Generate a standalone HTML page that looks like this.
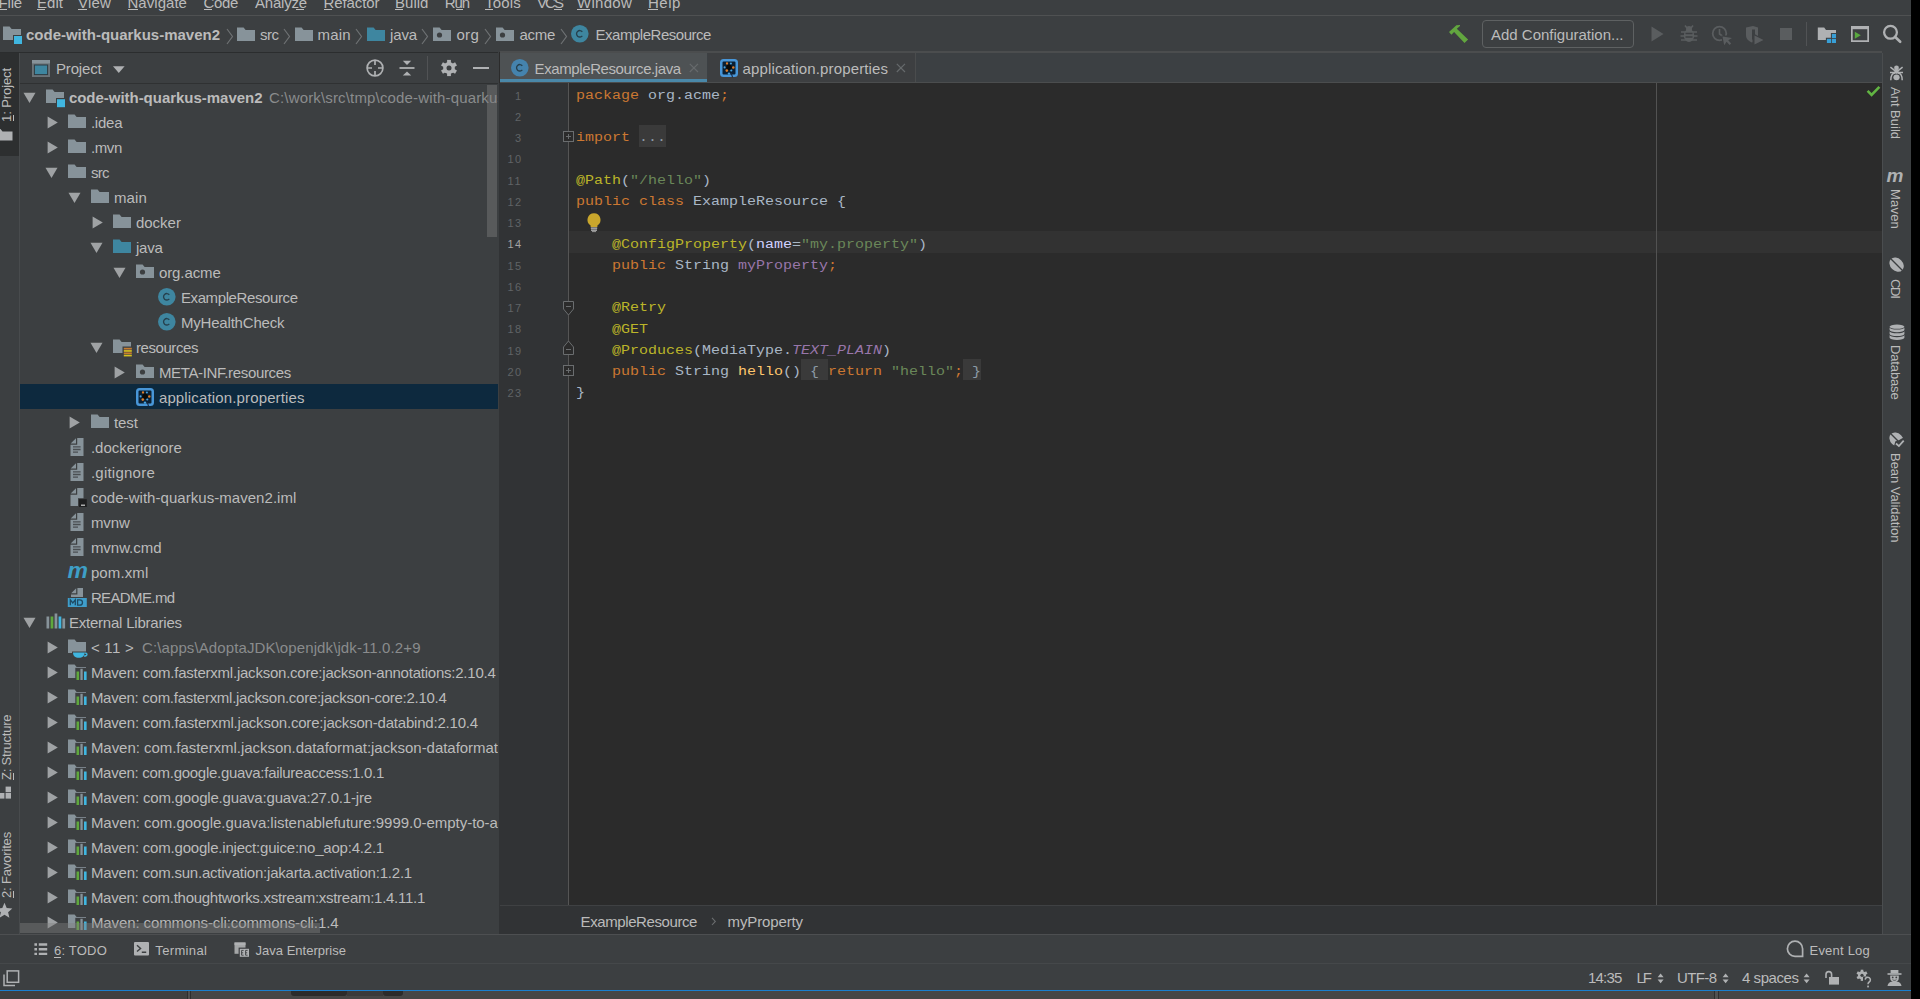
<!DOCTYPE html>
<html><head><meta charset="utf-8"><title>code-with-quarkus-maven2</title>
<style>
html,body{margin:0;padding:0;background:#3c3f41;}
body{width:1920px;height:999px;overflow:hidden;position:relative;font-family:'Liberation Sans',sans-serif;}
#r{position:absolute;left:0;top:0;width:1920px;height:999px;overflow:hidden;background:#3c3f41;}
#r div,#r svg,#r span{position:absolute;display:block;}
.t{white-space:pre;line-height:1;}
</style></head>
<body><div id="r">
<div style="left:0px;top:15px;width:1911px;height:1px;background:#4f5152;"></div>
<div style="left:0px;top:52px;width:498px;height:1px;background:#2b2d2e;"></div>
<div style="left:500px;top:51px;width:1382px;height:2px;background:#4b4d4e;"></div>
<div style="left:18.5px;top:53px;width:1.5px;height:881px;background:#484b4d;"></div>
<div style="left:0px;top:53px;width:18.5px;height:103px;background:#2d2f30;"></div>
<div style="left:20px;top:83px;width:478px;height:1px;background:#2f3132;"></div>
<div style="left:498.8px;top:52px;width:1.2px;height:31px;background:#2b2b2b;"></div>
<div style="left:500px;top:53px;width:1382px;height:29px;background:#3c4043;"></div>
<div style="left:500px;top:82px;width:1382px;height:1px;background:#4b4d4e;"></div>
<div style="left:500px;top:53px;width:207px;height:29px;background:#4e5254;"></div>
<div style="left:500px;top:79px;width:207px;height:3px;background:#4a88a9;"></div>
<div style="left:708px;top:53px;width:207px;height:29px;background:#3d3f41;"></div>
<div style="left:915px;top:53px;width:1px;height:29px;background:#4a4c4d;"></div>
<div style="left:500px;top:83px;width:1382px;height:823px;background:#2b2b2b;"></div>
<div style="left:499px;top:83px;width:69px;height:823px;background:#313335;"></div>
<div style="left:568px;top:83px;width:1px;height:823px;background:#555555;"></div>
<div style="left:499px;top:906px;width:1383px;height:28px;background:#313335;"></div>
<div style="left:500px;top:905px;width:1382px;height:1px;background:#3f4143;"></div>
<div style="left:1882px;top:53px;width:1px;height:881px;background:#4a4d4f;"></div>
<div style="left:1883px;top:53px;width:28px;height:881px;background:#3c3f41;"></div>
<div style="left:0px;top:934px;width:1911px;height:1px;background:#4d4f51;"></div>
<div style="left:0px;top:963px;width:1911px;height:1px;background:#45484a;"></div>
<div style="left:0px;top:990px;width:1911px;height:1px;background:#1a80d0;"></div>
<div style="left:0px;top:991px;width:1911px;height:8px;background:#464646;"></div>
<div style="left:0px;top:991px;width:187px;height:8px;background:#404040;"></div>
<div style="left:187px;top:991px;width:1px;height:8px;background:#2e2e2e;"></div>
<div style="left:190px;top:991px;width:1px;height:8px;background:#2e2e2e;"></div>
<div style="left:188px;top:991px;width:2px;height:8px;background:#505050;"></div>
<div style="left:291px;top:991px;width:56px;height:5px;background:#2b2b2b;border-radius:0 0 3px 3px;"></div>
<div style="left:347px;top:991px;width:36px;height:5px;background:#3a3a3a;"></div>
<div style="left:383px;top:991px;width:20px;height:5px;background:#2b2b2b;border-radius:0 0 3px 3px;"></div>
<div style="left:1714px;top:991px;width:1px;height:8px;background:#2e2e2e;"></div>
<div style="left:1718px;top:991px;width:1px;height:8px;background:#2e2e2e;"></div>
<div style="left:1715px;top:991px;width:3px;height:8px;background:#505050;"></div>
<div style="left:1911px;top:0px;width:9px;height:999px;background:#000000;"></div>
<span class="t" style="left:-1.50px;top:-4.70px;font-size:15px;color:#bbbbbb;letter-spacing:-0.168px;text-decoration:none;">File</span>
<span class="t" style="left:37.00px;top:-4.70px;font-size:15px;color:#bbbbbb;letter-spacing:0.035px;text-decoration:none;">Edit</span>
<span class="t" style="left:78.00px;top:-4.70px;font-size:15px;color:#bbbbbb;letter-spacing:0.188px;text-decoration:none;">View</span>
<span class="t" style="left:127.50px;top:-4.70px;font-size:15px;color:#bbbbbb;letter-spacing:0.037px;text-decoration:none;">Navigate</span>
<span class="t" style="left:203.50px;top:-4.70px;font-size:15px;color:#bbbbbb;letter-spacing:-0.340px;text-decoration:none;">Code</span>
<span class="t" style="left:255.00px;top:-4.70px;font-size:15px;color:#bbbbbb;letter-spacing:-0.196px;text-decoration:none;">Analyze</span>
<span class="t" style="left:323.50px;top:-4.70px;font-size:15px;color:#bbbbbb;letter-spacing:-0.088px;text-decoration:none;">Refactor</span>
<span class="t" style="left:395.00px;top:-4.70px;font-size:15px;color:#bbbbbb;letter-spacing:0.028px;text-decoration:none;">Build</span>
<span class="t" style="left:444.70px;top:-4.70px;font-size:15px;color:#bbbbbb;letter-spacing:-1.077px;text-decoration:none;">Run</span>
<span class="t" style="left:485.00px;top:-4.70px;font-size:15px;color:#bbbbbb;letter-spacing:0.194px;text-decoration:none;">Tools</span>
<span class="t" style="left:537.00px;top:-4.70px;font-size:15px;color:#bbbbbb;letter-spacing:-1.948px;text-decoration:none;">VCS</span>
<span class="t" style="left:577.00px;top:-4.70px;font-size:15px;color:#bbbbbb;letter-spacing:0.273px;text-decoration:none;">Window</span>
<span class="t" style="left:648.00px;top:-4.70px;font-size:15px;color:#bbbbbb;letter-spacing:0.535px;text-decoration:none;">Help</span>
<div style="left:0px;top:9px;width:7px;height:1px;background:#bbbbbb;"></div>
<div style="left:37px;top:9px;width:8px;height:1px;background:#bbbbbb;"></div>
<div style="left:78px;top:9px;width:9px;height:1px;background:#bbbbbb;"></div>
<div style="left:127.5px;top:9px;width:10.5px;height:1px;background:#bbbbbb;"></div>
<div style="left:203.5px;top:9px;width:8.5px;height:1px;background:#bbbbbb;"></div>
<div style="left:296px;top:9px;width:8px;height:1px;background:#bbbbbb;"></div>
<div style="left:323.5px;top:9px;width:8.5px;height:1px;background:#bbbbbb;"></div>
<div style="left:395px;top:9px;width:8px;height:1px;background:#bbbbbb;"></div>
<div style="left:456px;top:9px;width:7px;height:1px;background:#bbbbbb;"></div>
<div style="left:485px;top:9px;width:8px;height:1px;background:#bbbbbb;"></div>
<div style="left:554px;top:9px;width:8px;height:1px;background:#bbbbbb;"></div>
<div style="left:577px;top:9px;width:13px;height:1px;background:#bbbbbb;"></div>
<div style="left:648px;top:9px;width:10px;height:1px;background:#bbbbbb;"></div>
<svg style="left:2px;top:24px;" width="22" height="22" viewBox="0 0 22 22"><path d="M1 2.5h6.6l2 2.6H19V16H1z" fill="#87939a"/><rect x="11" y="11" width="10" height="10" fill="#3c3f41"/><rect x="12" y="12" width="8" height="8" fill="#40b6e0"/></svg>
<span class="t" style="left:26.00px;top:27.10px;font-size:15px;color:#bbbbbb;font-weight:700;letter-spacing:-0.009px;">code-with-quarkus-maven2</span>
<svg style="left:225.5px;top:28px;" width="8" height="17" viewBox="0 0 8 17"><path d="M1 1L6.5 8.5L1 16" fill="none" stroke="#6e7173" stroke-width="1.2"/></svg>
<svg style="left:236px;top:24px;" width="20" height="20" viewBox="0 0 20 20"><path d="M1 3.5h6.6l2 2.6H19V17H1z" fill="#87939a"/></svg>
<span class="t" style="left:260.00px;top:27.10px;font-size:15px;color:#bbbbbb;letter-spacing:-0.500px;">src</span>
<svg style="left:283px;top:28px;" width="8" height="17" viewBox="0 0 8 17"><path d="M1 1L6.5 8.5L1 16" fill="none" stroke="#6e7173" stroke-width="1.2"/></svg>
<svg style="left:294px;top:24px;" width="20" height="20" viewBox="0 0 20 20"><path d="M1 3.5h6.6l2 2.6H19V17H1z" fill="#87939a"/></svg>
<span class="t" style="left:317.60px;top:27.10px;font-size:15px;color:#bbbbbb;letter-spacing:0.121px;">main</span>
<svg style="left:354.5px;top:28px;" width="8" height="17" viewBox="0 0 8 17"><path d="M1 1L6.5 8.5L1 16" fill="none" stroke="#6e7173" stroke-width="1.2"/></svg>
<svg style="left:366px;top:24px;" width="20" height="20" viewBox="0 0 20 20"><path d="M1 3.5h6.6l2 2.6H19V17H1z" fill="#3e86a0"/></svg>
<span class="t" style="left:390.00px;top:27.10px;font-size:15px;color:#bbbbbb;letter-spacing:-0.133px;">java</span>
<svg style="left:421px;top:28px;" width="8" height="17" viewBox="0 0 8 17"><path d="M1 1L6.5 8.5L1 16" fill="none" stroke="#6e7173" stroke-width="1.2"/></svg>
<svg style="left:432px;top:24px;" width="20" height="20" viewBox="0 0 20 20"><path d="M1 3.5h6.6l2 2.6H19V17H1z" fill="#87939a"/><circle cx="7.5" cy="11" r="2.6" fill="#3c3f41"/></svg>
<span class="t" style="left:456.50px;top:27.10px;font-size:15px;color:#bbbbbb;letter-spacing:0.271px;">org</span>
<svg style="left:484px;top:28px;" width="8" height="17" viewBox="0 0 8 17"><path d="M1 1L6.5 8.5L1 16" fill="none" stroke="#6e7173" stroke-width="1.2"/></svg>
<svg style="left:495px;top:24px;" width="20" height="20" viewBox="0 0 20 20"><path d="M1 3.5h6.6l2 2.6H19V17H1z" fill="#87939a"/><circle cx="7.5" cy="11" r="2.6" fill="#3c3f41"/></svg>
<span class="t" style="left:519.50px;top:27.10px;font-size:15px;color:#bbbbbb;letter-spacing:-0.297px;">acme</span>
<svg style="left:559.5px;top:28px;" width="8" height="17" viewBox="0 0 8 17"><path d="M1 1L6.5 8.5L1 16" fill="none" stroke="#6e7173" stroke-width="1.2"/></svg>
<svg style="left:570.2px;top:24.2px;" width="19.6" height="19.6" viewBox="0 0 19.6 19.6"><circle cx="9.8" cy="9.8" r="8.8" fill="#3e86a0"/><path d="M12.3 7.700000000000001A3.25 3.25 0 1 0 12.3 11.9" fill="none" stroke="#26404d" stroke-width="1.35"/></svg>
<span class="t" style="left:595.50px;top:27.10px;font-size:15px;color:#bbbbbb;letter-spacing:-0.471px;">ExampleResource</span>
<svg style="left:1446px;top:22px;" width="24" height="24" viewBox="0 0 24 24"><path d="M3 10.1L10.4 3.2L14 3.05V4.1L10.8 6.7L22.1 17.5L18.5 20.9L8.1 10.1L5.4 12.8z" fill="#62a63f"/></svg>
<div style="left:1482px;top:20px;width:150px;height:26px;border:1px solid #5e6162;border-radius:4px;box-sizing:content-box"></div>
<span class="t" style="left:1491.00px;top:27.30px;font-size:15px;color:#bbbbbb;letter-spacing:-0.005px;">Add Configuration...</span>
<svg style="left:1650px;top:25px;" width="16" height="18" viewBox="0 0 16 18"><path d="M1.5 1.5L13.5 9L1.5 16.5z" fill="#5a5d5f"/></svg>
<svg style="left:1679px;top:24px;" width="20" height="20" viewBox="0 0 20 20"><ellipse cx="10" cy="11.5" rx="5.2" ry="6.5" fill="#5a5d5f"/><circle cx="10" cy="5" r="3" fill="#5a5d5f"/><path d="M2 8h16M1.5 12h17M2 16h16M6 1.5L8 4M14 1.5L12 4" stroke="#5a5d5f" stroke-width="1.6" fill="none"/><path d="M6.5 9.5h7M6.5 13h7" stroke="#3c3f41" stroke-width="1.4"/></svg>
<svg style="left:1711px;top:24px;" width="24" height="24" viewBox="0 0 24 24"><circle cx="8.5" cy="9.5" r="6.8" fill="none" stroke="#5a5d5f" stroke-width="1.8"/><path d="M8.5 5v5l3 2" stroke="#5a5d5f" stroke-width="1.6" fill="none"/><path d="M10.5 11.5h11l-4 4l3.5 3.5l-2 2l-3.5-3.5l-4 4z" fill="#3c3f41"/><path d="M11.5 12.5l9.5 1.5l-3.8 2.3l3 3.2l-1.6 1.5l-3-3.2l-2.4 3.5z" fill="#5a5d5f"/></svg>
<svg style="left:1744px;top:24px;" width="24" height="24" viewBox="0 0 24 24"><path d="M2 3.5L9 2L14 3.5V11C14 15 11 17.5 8 18.5C4.5 17 2 15 2 11z" fill="#5a5d5f"/><path d="M8 5.5h3v10H8z" fill="#3c3f41"/><path d="M8.5 9v13l12-6.5z" fill="#3c3f41"/><path d="M10.5 11.5v9l9-4.5z" fill="#5a5d5f"/></svg>
<div style="left:1780px;top:28px;width:12px;height:12.2px;background:#5a5d5f;"></div>
<div style="left:1806px;top:22px;width:1px;height:24px;background:#515355;"></div>
<svg style="left:1817px;top:26px;" width="21" height="19" viewBox="0 0 21 19"><path d="M0.8 1.6h6.4l1.8 2.4H19V14.1H0.8z" fill="#afb1b3"/><path d="M13.9 6.9h6.1v11.1H8.9V11.8h5z" fill="#3c3f41"/><rect x="14.9" y="7.9" width="4.1" height="4.1" fill="#389fd6"/><rect x="9.9" y="12.8" width="4.2" height="4.2" fill="#389fd6"/><rect x="14.9" y="12.8" width="4.1" height="4.2" fill="#389fd6"/></svg>
<svg style="left:1851px;top:26px;" width="18" height="16" viewBox="0 0 18 16"><path d="M0.85 0.85h16.3v14.3H0.85z" fill="none" stroke="#afb1b3" stroke-width="1.7"/><rect x="0" y="0" width="18" height="3.2" fill="#afb1b3"/><path d="M3.8 5.8L9.8 9.3L3.8 12.8z" fill="#59a83f"/></svg>
<svg style="left:1881px;top:23px;" width="22" height="21" viewBox="0 0 22 21"><circle cx="9.5" cy="9.3" r="6.4" fill="none" stroke="#afb1b3" stroke-width="2.3"/><path d="M14.2 14L19.2 18.8" stroke="#afb1b3" stroke-width="2.6" stroke-linecap="round"/></svg>
<svg style="left:31px;top:59px;" width="20" height="19" viewBox="0 0 20 19"><rect x="1" y="1" width="18" height="17" fill="#6b7378"/><rect x="1" y="1" width="18" height="3.4" fill="#87939a"/><rect x="3.4" y="6" width="13.2" height="9.6" fill="#3e86a0" stroke="#2d3b42" stroke-width="1"/></svg>
<span class="t" style="left:56.00px;top:60.90px;font-size:15px;color:#bbbbbb;letter-spacing:-0.170px;">Project</span>
<svg style="left:113px;top:65.8px;" width="12" height="8" viewBox="0 0 12 8"><path d="M0 0.2h11.6L5.8 6.9z" fill="#afb1b3"/></svg>
<svg style="left:365px;top:58px;" width="20" height="20" viewBox="0 0 20 20"><circle cx="10" cy="10" r="7.9" fill="none" stroke="#afb1b3" stroke-width="1.7"/><path d="M10 2v5M10 13v5M2 10h5M13 10h5" stroke="#afb1b3" stroke-width="1.7"/></svg>
<svg style="left:398px;top:59px;" width="18" height="18" viewBox="0 0 18 18"><path d="M1.5 9h15" stroke="#afb1b3" stroke-width="1.8"/><path d="M4.8 1.8h8.4L9 6z" fill="#afb1b3"/><path d="M4.8 16.6h8.4L9 12.4z" fill="#afb1b3"/></svg>
<div style="left:427px;top:56px;width:1px;height:24px;background:#515355;"></div>
<svg style="left:440px;top:59px;" width="18" height="18" viewBox="0 0 18 18"><g transform="translate(9 9)" fill="#afb1b3"><rect x="-1.9" y="-8.1" width="3.8" height="4" transform="rotate(0)" /><rect x="-1.9" y="-8.1" width="3.8" height="4" transform="rotate(60)" /><rect x="-1.9" y="-8.1" width="3.8" height="4" transform="rotate(120)" /><rect x="-1.9" y="-8.1" width="3.8" height="4" transform="rotate(180)" /><rect x="-1.9" y="-8.1" width="3.8" height="4" transform="rotate(240)" /><rect x="-1.9" y="-8.1" width="3.8" height="4" transform="rotate(300)" /><circle r="5.9"/><circle r="2.5" fill="#3c3f41"/></g></svg>
<div style="left:473px;top:67px;width:16px;height:2.2px;background:#afb1b3;"></div>
<svg style="left:22.9px;top:92.0px;" width="13" height="12" viewBox="0 0 13 12"><path d="M0.5 0.8h12L6.5 11z" fill="#9fa2a4"/></svg>
<svg style="left:45px;top:86.0px;" width="23" height="24" viewBox="0 0 23 24"><path d="M1 3.5h6.6l2 2.6H19V17H1z" fill="#87939a"/><rect x="11" y="12" width="10" height="10" fill="#3c3f41"/><rect x="12" y="13.2" width="8" height="8" fill="#40b6e0"/></svg>
<span class="t" style="left:68.90px;top:90.00px;font-size:15px;color:#bbbbbb;font-weight:700;letter-spacing:-0.026px;">code-with-quarkus-maven2</span>
<span class="t" style="left:269.00px;top:90.00px;font-size:15px;color:#8a8c8d;letter-spacing:0.159px;width:229.0px;clip-path:inset(-6px 0 -6px 0);">C:\work\src\tmp\code-with-quarkus-maven2</span>
<svg style="left:46.699999999999996px;top:115.6px;" width="12" height="13" viewBox="0 0 12 13"><path d="M0.6 0.5v12L10.8 6.5z" fill="#9fa2a4"/></svg>
<svg style="left:67px;top:111.0px;" width="22" height="22" viewBox="0 0 22 22"><path d="M1 3.5h6.6l2 2.6H19V17H1z" fill="#87939a"/></svg>
<span class="t" style="left:90.90px;top:115.00px;font-size:15px;color:#bbbbbb;letter-spacing:-0.206px;">.idea</span>
<svg style="left:46.699999999999996px;top:140.6px;" width="12" height="13" viewBox="0 0 12 13"><path d="M0.6 0.5v12L10.8 6.5z" fill="#9fa2a4"/></svg>
<svg style="left:67px;top:136.0px;" width="22" height="22" viewBox="0 0 22 22"><path d="M1 3.5h6.6l2 2.6H19V17H1z" fill="#87939a"/></svg>
<span class="t" style="left:90.90px;top:140.00px;font-size:15px;color:#bbbbbb;letter-spacing:-0.379px;">.mvn</span>
<svg style="left:45.4px;top:167.0px;" width="13" height="12" viewBox="0 0 13 12"><path d="M0.5 0.8h12L6.5 11z" fill="#9fa2a4"/></svg>
<svg style="left:67px;top:161.0px;" width="22" height="22" viewBox="0 0 22 22"><path d="M1 3.5h6.6l2 2.6H19V17H1z" fill="#87939a"/></svg>
<span class="t" style="left:90.90px;top:165.00px;font-size:15px;color:#bbbbbb;letter-spacing:-0.667px;">src</span>
<svg style="left:67.9px;top:192.0px;" width="13" height="12" viewBox="0 0 13 12"><path d="M0.5 0.8h12L6.5 11z" fill="#9fa2a4"/></svg>
<svg style="left:90px;top:186.0px;" width="22" height="22" viewBox="0 0 22 22"><path d="M1 3.5h6.6l2 2.6H19V17H1z" fill="#87939a"/></svg>
<span class="t" style="left:113.90px;top:190.00px;font-size:15px;color:#bbbbbb;letter-spacing:0.146px;">main</span>
<svg style="left:91.7px;top:215.6px;" width="12" height="13" viewBox="0 0 12 13"><path d="M0.6 0.5v12L10.8 6.5z" fill="#9fa2a4"/></svg>
<svg style="left:112px;top:211.0px;" width="22" height="22" viewBox="0 0 22 22"><path d="M1 3.5h6.6l2 2.6H19V17H1z" fill="#87939a"/></svg>
<span class="t" style="left:135.90px;top:215.00px;font-size:15px;color:#bbbbbb;letter-spacing:0.011px;">docker</span>
<svg style="left:90.4px;top:242.0px;" width="13" height="12" viewBox="0 0 13 12"><path d="M0.5 0.8h12L6.5 11z" fill="#9fa2a4"/></svg>
<svg style="left:112px;top:236.0px;" width="22" height="22" viewBox="0 0 22 22"><path d="M1 3.5h6.6l2 2.6H19V17H1z" fill="#3e86a0"/></svg>
<span class="t" style="left:135.90px;top:240.00px;font-size:15px;color:#bbbbbb;letter-spacing:-0.158px;">java</span>
<svg style="left:112.9px;top:267.0px;" width="13" height="12" viewBox="0 0 13 12"><path d="M0.5 0.8h12L6.5 11z" fill="#9fa2a4"/></svg>
<svg style="left:135px;top:261.0px;" width="22" height="22" viewBox="0 0 22 22"><path d="M1 3.5h6.6l2 2.6H19V17H1z" fill="#87939a"/><circle cx="7.5" cy="11" r="2.6" fill="#3c3f41"/></svg>
<span class="t" style="left:158.90px;top:265.00px;font-size:15px;color:#bbbbbb;letter-spacing:-0.079px;">org.acme</span>
<svg style="left:157.2px;top:286.9px;" width="19.6" height="19.6" viewBox="0 0 19.6 19.6"><circle cx="9.8" cy="9.8" r="8.8" fill="#3e86a0"/><path d="M12.3 7.700000000000001A3.25 3.25 0 1 0 12.3 11.9" fill="none" stroke="#26404d" stroke-width="1.35"/></svg>
<span class="t" style="left:180.90px;top:290.00px;font-size:15px;color:#bbbbbb;letter-spacing:-0.384px;">ExampleResource</span>
<svg style="left:157.2px;top:311.9px;" width="19.6" height="19.6" viewBox="0 0 19.6 19.6"><circle cx="9.8" cy="9.8" r="8.8" fill="#3e86a0"/><path d="M12.3 7.700000000000001A3.25 3.25 0 1 0 12.3 11.9" fill="none" stroke="#26404d" stroke-width="1.35"/></svg>
<span class="t" style="left:180.90px;top:315.00px;font-size:15px;color:#bbbbbb;letter-spacing:-0.183px;">MyHealthCheck</span>
<svg style="left:90.4px;top:342.0px;" width="13" height="12" viewBox="0 0 13 12"><path d="M0.5 0.8h12L6.5 11z" fill="#9fa2a4"/></svg>
<svg style="left:112px;top:336.0px;" width="23" height="24" viewBox="0 0 23 24"><path d="M1 3.5h6.6l2 2.6H19V17H1z" fill="#87939a"/><rect x="10.5" y="10.5" width="10.5" height="12" fill="#3c3f41"/><rect x="11.8" y="11.8" width="8" height="1.7" fill="#c77d2e"/><rect x="11.8" y="14.1" width="8" height="1.7" fill="#d6bf1e"/><rect x="11.8" y="16.4" width="8" height="1.7" fill="#c77d2e"/><rect x="11.8" y="18.7" width="8" height="1.7" fill="#d6bf1e"/></svg>
<span class="t" style="left:135.90px;top:340.00px;font-size:15px;color:#bbbbbb;letter-spacing:-0.418px;">resources</span>
<svg style="left:114.2px;top:365.6px;" width="12" height="13" viewBox="0 0 12 13"><path d="M0.6 0.5v12L10.8 6.5z" fill="#9fa2a4"/></svg>
<svg style="left:135px;top:361.0px;" width="22" height="22" viewBox="0 0 22 22"><path d="M1 3.5h6.6l2 2.6H19V17H1z" fill="#87939a"/><circle cx="7.5" cy="11" r="2.6" fill="#3c3f41"/></svg>
<span class="t" style="left:158.90px;top:365.00px;font-size:15px;color:#bbbbbb;letter-spacing:-0.338px;">META-INF.resources</span>
<div style="left:20px;top:383.75px;width:478px;height:25px;background:#0d293e;"></div>
<svg style="left:135px;top:387.0px;" width="21" height="21" viewBox="0 0 21 21"><rect x="2.25" y="2.25" width="15.5" height="15.5" rx="2.3" fill="#0b2033" stroke="#4896d8" stroke-width="2.5"/><circle cx="10" cy="9.2" r="2.7" fill="#0a0a08"/><circle cx="8" cy="5.5" r="1.15" fill="#dd7d2a"/><circle cx="14.3" cy="9.4" r="1.25" fill="#dd7d2a"/><circle cx="7.8" cy="12.6" r="1.3" fill="#dd7d2a"/><circle cx="11.9" cy="5.5" r="1.05" fill="#45a2e2"/><circle cx="5.6" cy="9.4" r="1.05" fill="#45a2e2"/><circle cx="12.3" cy="12.5" r="1.1" fill="#45a2e2"/><circle cx="10" cy="15.6" r="1.2" fill="#45a2e2"/><path d="M12.2 15.2L13.6 19.4" stroke="#1a2740" stroke-width="1.1"/></svg>
<span class="t" style="left:158.90px;top:390.00px;font-size:15px;color:#bbbbbb;letter-spacing:0.146px;">application.properties</span>
<svg style="left:69.2px;top:415.6px;" width="12" height="13" viewBox="0 0 12 13"><path d="M0.6 0.5v12L10.8 6.5z" fill="#9fa2a4"/></svg>
<svg style="left:90px;top:411.0px;" width="22" height="22" viewBox="0 0 22 22"><path d="M1 3.5h6.6l2 2.6H19V17H1z" fill="#87939a"/></svg>
<span class="t" style="left:113.90px;top:415.00px;font-size:15px;color:#bbbbbb;letter-spacing:-0.022px;">test</span>
<svg style="left:65.5px;top:436.8px;" width="22" height="22" viewBox="0 0 22 22"><path d="M11.2 1H17.5V19H4.5V7.8H11.2z" fill="#87939a"/><path d="M10 1.3V6.6H4.7z" fill="#87939a"/><path d="M7 9.9h7.6M7 12.5h7.6M7 15.1h5" stroke="#3c3f41" stroke-width="1.3" opacity="0.8"/></svg>
<span class="t" style="left:90.90px;top:440.00px;font-size:15px;color:#bbbbbb;">.dockerignore</span>
<svg style="left:65.5px;top:461.8px;" width="22" height="22" viewBox="0 0 22 22"><path d="M11.2 1H17.5V19H4.5V7.8H11.2z" fill="#87939a"/><path d="M10 1.3V6.6H4.7z" fill="#87939a"/><path d="M7 9.9h7.6M7 12.5h7.6M7 15.1h5" stroke="#3c3f41" stroke-width="1.3" opacity="0.8"/></svg>
<span class="t" style="left:90.90px;top:465.00px;font-size:15px;color:#bbbbbb;letter-spacing:0.238px;">.gitignore</span>
<svg style="left:65.5px;top:486.8px;" width="23" height="23" viewBox="0 0 23 23"><path d="M11.2 1H17.5V19H4.5V7.8H11.2z" fill="#87939a"/><path d="M10 1.3V6.6H4.7z" fill="#87939a"/><rect x="12" y="11.2" width="9.8" height="9.8" fill="#3c3f41"/><rect x="13" y="12.2" width="7.8" height="7.8" fill="#1e1f20"/><rect x="15" y="17.6" width="4" height="1.2" fill="#d0d0d0"/></svg>
<span class="t" style="left:90.90px;top:490.00px;font-size:15px;color:#bbbbbb;letter-spacing:0.045px;">code-with-quarkus-maven2.iml</span>
<svg style="left:65.5px;top:511.8px;" width="22" height="22" viewBox="0 0 22 22"><path d="M11.2 1H17.5V19H4.5V7.8H11.2z" fill="#87939a"/><path d="M10 1.3V6.6H4.7z" fill="#87939a"/><path d="M7 9.9h7.6M7 12.5h7.6M7 15.1h5" stroke="#3c3f41" stroke-width="1.3" opacity="0.8"/></svg>
<span class="t" style="left:90.90px;top:515.00px;font-size:15px;color:#bbbbbb;letter-spacing:-0.093px;">mvnw</span>
<svg style="left:65.5px;top:536.8px;" width="22" height="22" viewBox="0 0 22 22"><path d="M11.2 1H17.5V19H4.5V7.8H11.2z" fill="#87939a"/><path d="M10 1.3V6.6H4.7z" fill="#87939a"/><path d="M7 9.9h7.6M7 12.5h7.6M7 15.1h5" stroke="#3c3f41" stroke-width="1.3" opacity="0.8"/></svg>
<span class="t" style="left:90.90px;top:540.00px;font-size:15px;color:#bbbbbb;letter-spacing:-0.032px;">mvnw.cmd</span>
<span class="t" style="left:67.60px;top:558.73px;font-size:23px;color:#3e9fc7;font-weight:700;font-style:italic;letter-spacing:-1.453px;transform:scaleY(0.98);">m</span>
<span class="t" style="left:90.90px;top:565.00px;font-size:15px;color:#bbbbbb;letter-spacing:0.116px;">pom.xml</span>
<svg style="left:66.2px;top:586.8px;" width="23" height="23" viewBox="0 0 23 23"><path d="M11.4 1H17V10H5V7.4H11.4z" fill="#87939a"/><path d="M10.2 1.3V6.2H5.2z" fill="#87939a"/><rect x="1.8" y="11" width="19" height="9" fill="#3f9ecb"/><path d="M4.3 18.2V12.8l2.5 3.2l2.5-3.2v5.4M11.6 12.8h2.2a2.7 2.7 0 0 1 0 5.4h-2.2z" fill="none" stroke="#1f4a63" stroke-width="1.3"/></svg>
<span class="t" style="left:90.90px;top:590.00px;font-size:15px;color:#bbbbbb;letter-spacing:-0.621px;">README.md</span>
<svg style="left:22.9px;top:617.0px;" width="13" height="12" viewBox="0 0 13 12"><path d="M0.5 0.8h12L6.5 11z" fill="#9fa2a4"/></svg>
<svg style="left:45.6px;top:609.5px;" width="22" height="22" viewBox="0 0 22 22"><rect x="0.5" y="6.5" width="2.7" height="12" fill="#87939a"/><rect x="4.6" y="6.5" width="2.7" height="12" fill="#5fa83d"/><rect x="8.6" y="3.5" width="2.7" height="15" fill="#87939a"/><rect x="12.6" y="6.5" width="2.7" height="12" fill="#40b6e0"/><rect x="16.4" y="8.5" width="2.7" height="10" fill="#87939a"/></svg>
<span class="t" style="left:68.90px;top:615.00px;font-size:15px;color:#bbbbbb;letter-spacing:-0.212px;">External Libraries</span>
<svg style="left:46.699999999999996px;top:640.6px;" width="12" height="13" viewBox="0 0 12 13"><path d="M0.6 0.5v12L10.8 6.5z" fill="#9fa2a4"/></svg>
<svg style="left:67px;top:636.0px;" width="23" height="24" viewBox="0 0 23 24"><path d="M1 3.5h6.6l2 2.6H19V17H1z" fill="#87939a"/><path d="M5 15.5h16.5v7H5z" fill="#3c3f41"/><path d="M6 16.4h11.6c0 3.6-2.2 5.3-5.8 5.3s-5.8-1.7-5.8-5.3z" fill="#40b6e0"/><path d="M17.6 17.2c3.2-0.6 3.4 2.8-0.6 3" fill="none" stroke="#40b6e0" stroke-width="1.2"/></svg>
<span class="t" style="left:90.90px;top:640.00px;font-size:15px;color:#bbbbbb;letter-spacing:0.277px;">&lt; 11 &gt;</span>
<span class="t" style="left:142.00px;top:640.00px;font-size:15px;color:#8a8c8d;letter-spacing:0.108px;">C:\apps\AdoptaJDK\openjdk\jdk-11.0.2+9</span>
<svg style="left:46.699999999999996px;top:665.6px;" width="12" height="13" viewBox="0 0 12 13"><path d="M0.6 0.5v12L10.8 6.5z" fill="#9fa2a4"/></svg>
<svg style="left:67px;top:661.0px;" width="23" height="24" viewBox="0 0 23 24"><path d="M1 3.5h6.6l2 2.6H19V17H1z" fill="#87939a"/><rect x="8.3" y="6.8" width="12.5" height="13" fill="#3c3f41"/><rect x="9.5" y="10.5" width="2.6" height="8.5" fill="#5fa83d"/><rect x="13.4" y="7.8" width="2.3" height="11.2" fill="#87939a"/><rect x="17" y="10.5" width="2.6" height="8.5" fill="#40b6e0"/></svg>
<span class="t" style="left:90.90px;top:665.00px;font-size:15px;color:#bbbbbb;letter-spacing:-0.231px;">Maven: com.fasterxml.jackson.core:jackson-annotations:2.10.4</span>
<svg style="left:46.699999999999996px;top:690.6px;" width="12" height="13" viewBox="0 0 12 13"><path d="M0.6 0.5v12L10.8 6.5z" fill="#9fa2a4"/></svg>
<svg style="left:67px;top:686.0px;" width="23" height="24" viewBox="0 0 23 24"><path d="M1 3.5h6.6l2 2.6H19V17H1z" fill="#87939a"/><rect x="8.3" y="6.8" width="12.5" height="13" fill="#3c3f41"/><rect x="9.5" y="10.5" width="2.6" height="8.5" fill="#5fa83d"/><rect x="13.4" y="7.8" width="2.3" height="11.2" fill="#87939a"/><rect x="17" y="10.5" width="2.6" height="8.5" fill="#40b6e0"/></svg>
<span class="t" style="left:90.90px;top:690.00px;font-size:15px;color:#bbbbbb;letter-spacing:-0.273px;">Maven: com.fasterxml.jackson.core:jackson-core:2.10.4</span>
<svg style="left:46.699999999999996px;top:715.6px;" width="12" height="13" viewBox="0 0 12 13"><path d="M0.6 0.5v12L10.8 6.5z" fill="#9fa2a4"/></svg>
<svg style="left:67px;top:711.0px;" width="23" height="24" viewBox="0 0 23 24"><path d="M1 3.5h6.6l2 2.6H19V17H1z" fill="#87939a"/><rect x="8.3" y="6.8" width="12.5" height="13" fill="#3c3f41"/><rect x="9.5" y="10.5" width="2.6" height="8.5" fill="#5fa83d"/><rect x="13.4" y="7.8" width="2.3" height="11.2" fill="#87939a"/><rect x="17" y="10.5" width="2.6" height="8.5" fill="#40b6e0"/></svg>
<span class="t" style="left:90.90px;top:715.00px;font-size:15px;color:#bbbbbb;letter-spacing:-0.202px;">Maven: com.fasterxml.jackson.core:jackson-databind:2.10.4</span>
<svg style="left:46.699999999999996px;top:740.6px;" width="12" height="13" viewBox="0 0 12 13"><path d="M0.6 0.5v12L10.8 6.5z" fill="#9fa2a4"/></svg>
<svg style="left:67px;top:736.0px;" width="23" height="24" viewBox="0 0 23 24"><path d="M1 3.5h6.6l2 2.6H19V17H1z" fill="#87939a"/><rect x="8.3" y="6.8" width="12.5" height="13" fill="#3c3f41"/><rect x="9.5" y="10.5" width="2.6" height="8.5" fill="#5fa83d"/><rect x="13.4" y="7.8" width="2.3" height="11.2" fill="#87939a"/><rect x="17" y="10.5" width="2.6" height="8.5" fill="#40b6e0"/></svg>
<span class="t" style="left:90.90px;top:740.00px;font-size:15px;color:#bbbbbb;letter-spacing:-0.040px;width:407.1px;clip-path:inset(-6px 0 -6px 0);">Maven: com.fasterxml.jackson.dataformat:jackson-dataformat-yaml:2.10.4</span>
<svg style="left:46.699999999999996px;top:765.6px;" width="12" height="13" viewBox="0 0 12 13"><path d="M0.6 0.5v12L10.8 6.5z" fill="#9fa2a4"/></svg>
<svg style="left:67px;top:761.0px;" width="23" height="24" viewBox="0 0 23 24"><path d="M1 3.5h6.6l2 2.6H19V17H1z" fill="#87939a"/><rect x="8.3" y="6.8" width="12.5" height="13" fill="#3c3f41"/><rect x="9.5" y="10.5" width="2.6" height="8.5" fill="#5fa83d"/><rect x="13.4" y="7.8" width="2.3" height="11.2" fill="#87939a"/><rect x="17" y="10.5" width="2.6" height="8.5" fill="#40b6e0"/></svg>
<span class="t" style="left:90.90px;top:765.00px;font-size:15px;color:#bbbbbb;letter-spacing:-0.281px;">Maven: com.google.guava:failureaccess:1.0.1</span>
<svg style="left:46.699999999999996px;top:790.6px;" width="12" height="13" viewBox="0 0 12 13"><path d="M0.6 0.5v12L10.8 6.5z" fill="#9fa2a4"/></svg>
<svg style="left:67px;top:786.0px;" width="23" height="24" viewBox="0 0 23 24"><path d="M1 3.5h6.6l2 2.6H19V17H1z" fill="#87939a"/><rect x="8.3" y="6.8" width="12.5" height="13" fill="#3c3f41"/><rect x="9.5" y="10.5" width="2.6" height="8.5" fill="#5fa83d"/><rect x="13.4" y="7.8" width="2.3" height="11.2" fill="#87939a"/><rect x="17" y="10.5" width="2.6" height="8.5" fill="#40b6e0"/></svg>
<span class="t" style="left:90.90px;top:790.00px;font-size:15px;color:#bbbbbb;letter-spacing:-0.188px;">Maven: com.google.guava:guava:27.0.1-jre</span>
<svg style="left:46.699999999999996px;top:815.6px;" width="12" height="13" viewBox="0 0 12 13"><path d="M0.6 0.5v12L10.8 6.5z" fill="#9fa2a4"/></svg>
<svg style="left:67px;top:811.0px;" width="23" height="24" viewBox="0 0 23 24"><path d="M1 3.5h6.6l2 2.6H19V17H1z" fill="#87939a"/><rect x="8.3" y="6.8" width="12.5" height="13" fill="#3c3f41"/><rect x="9.5" y="10.5" width="2.6" height="8.5" fill="#5fa83d"/><rect x="13.4" y="7.8" width="2.3" height="11.2" fill="#87939a"/><rect x="17" y="10.5" width="2.6" height="8.5" fill="#40b6e0"/></svg>
<span class="t" style="left:90.90px;top:815.00px;font-size:15px;color:#bbbbbb;letter-spacing:-0.027px;width:407.1px;clip-path:inset(-6px 0 -6px 0);">Maven: com.google.guava:listenablefuture:9999.0-empty-to-avoid-conflict</span>
<svg style="left:46.699999999999996px;top:840.6px;" width="12" height="13" viewBox="0 0 12 13"><path d="M0.6 0.5v12L10.8 6.5z" fill="#9fa2a4"/></svg>
<svg style="left:67px;top:836.0px;" width="23" height="24" viewBox="0 0 23 24"><path d="M1 3.5h6.6l2 2.6H19V17H1z" fill="#87939a"/><rect x="8.3" y="6.8" width="12.5" height="13" fill="#3c3f41"/><rect x="9.5" y="10.5" width="2.6" height="8.5" fill="#5fa83d"/><rect x="13.4" y="7.8" width="2.3" height="11.2" fill="#87939a"/><rect x="17" y="10.5" width="2.6" height="8.5" fill="#40b6e0"/></svg>
<span class="t" style="left:90.90px;top:840.00px;font-size:15px;color:#bbbbbb;letter-spacing:-0.204px;">Maven: com.google.inject:guice:no_aop:4.2.1</span>
<svg style="left:46.699999999999996px;top:865.6px;" width="12" height="13" viewBox="0 0 12 13"><path d="M0.6 0.5v12L10.8 6.5z" fill="#9fa2a4"/></svg>
<svg style="left:67px;top:861.0px;" width="23" height="24" viewBox="0 0 23 24"><path d="M1 3.5h6.6l2 2.6H19V17H1z" fill="#87939a"/><rect x="8.3" y="6.8" width="12.5" height="13" fill="#3c3f41"/><rect x="9.5" y="10.5" width="2.6" height="8.5" fill="#5fa83d"/><rect x="13.4" y="7.8" width="2.3" height="11.2" fill="#87939a"/><rect x="17" y="10.5" width="2.6" height="8.5" fill="#40b6e0"/></svg>
<span class="t" style="left:90.90px;top:865.00px;font-size:15px;color:#bbbbbb;letter-spacing:-0.215px;">Maven: com.sun.activation:jakarta.activation:1.2.1</span>
<svg style="left:46.699999999999996px;top:890.6px;" width="12" height="13" viewBox="0 0 12 13"><path d="M0.6 0.5v12L10.8 6.5z" fill="#9fa2a4"/></svg>
<svg style="left:67px;top:886.0px;" width="23" height="24" viewBox="0 0 23 24"><path d="M1 3.5h6.6l2 2.6H19V17H1z" fill="#87939a"/><rect x="8.3" y="6.8" width="12.5" height="13" fill="#3c3f41"/><rect x="9.5" y="10.5" width="2.6" height="8.5" fill="#5fa83d"/><rect x="13.4" y="7.8" width="2.3" height="11.2" fill="#87939a"/><rect x="17" y="10.5" width="2.6" height="8.5" fill="#40b6e0"/></svg>
<span class="t" style="left:90.90px;top:890.00px;font-size:15px;color:#bbbbbb;letter-spacing:-0.277px;">Maven: com.thoughtworks.xstream:xstream:1.4.11.1</span>
<svg style="left:46.699999999999996px;top:915.6px;" width="12" height="13" viewBox="0 0 12 13"><path d="M0.6 0.5v12L10.8 6.5z" fill="#9fa2a4"/></svg>
<svg style="left:67px;top:911.0px;" width="23" height="24" viewBox="0 0 23 24"><path d="M1 3.5h6.6l2 2.6H19V17H1z" fill="#87939a"/><rect x="8.3" y="6.8" width="12.5" height="13" fill="#3c3f41"/><rect x="9.5" y="10.5" width="2.6" height="8.5" fill="#5fa83d"/><rect x="13.4" y="7.8" width="2.3" height="11.2" fill="#87939a"/><rect x="17" y="10.5" width="2.6" height="8.5" fill="#40b6e0"/></svg>
<span class="t" style="left:90.90px;top:915.00px;font-size:15px;color:#bbbbbb;letter-spacing:-0.097px;">Maven: commons-cli:commons-cli:1.4</span>
<div style="left:487px;top:85px;width:10px;height:152px;background:rgba(128,128,128,0.42);"></div>
<div style="left:20px;top:922.5px;width:300px;height:10px;background:rgba(128,128,128,0.42);"></div>
<svg style="left:510.3px;top:58.3px;" width="19.6" height="19.6" viewBox="0 0 19.6 19.6"><circle cx="9.8" cy="9.8" r="8.8" fill="#4583ad"/><path d="M12.3 7.700000000000001A3.25 3.25 0 1 0 12.3 11.9" fill="none" stroke="#26404d" stroke-width="1.35"/></svg>
<span class="t" style="left:534.60px;top:60.80px;font-size:15px;color:#bbbbbb;letter-spacing:-0.403px;">ExampleResource.java</span>
<svg style="left:689px;top:62.8px;" width="10" height="10" viewBox="0 0 10 10"><path d="M0.8 0.8L9 9M9 0.8L0.8 9" stroke="#666a6c" stroke-width="1.2"/></svg>
<svg style="left:719px;top:58px;" width="21" height="21" viewBox="0 0 21 21"><rect x="2.25" y="2.25" width="15.5" height="15.5" rx="2.3" fill="#0b2033" stroke="#4896d8" stroke-width="2.5"/><circle cx="10" cy="9.2" r="2.7" fill="#0a0a08"/><circle cx="8" cy="5.5" r="1.15" fill="#dd7d2a"/><circle cx="14.3" cy="9.4" r="1.25" fill="#dd7d2a"/><circle cx="7.8" cy="12.6" r="1.3" fill="#dd7d2a"/><circle cx="11.9" cy="5.5" r="1.05" fill="#45a2e2"/><circle cx="5.6" cy="9.4" r="1.05" fill="#45a2e2"/><circle cx="12.3" cy="12.5" r="1.1" fill="#45a2e2"/><circle cx="10" cy="15.6" r="1.2" fill="#45a2e2"/><path d="M12.2 15.2L13.6 19.4" stroke="#1a2740" stroke-width="1.1"/></svg>
<span class="t" style="left:742.50px;top:60.80px;font-size:15px;color:#bbbbbb;letter-spacing:0.141px;">application.properties</span>
<svg style="left:896.2px;top:62.8px;" width="10" height="10" viewBox="0 0 10 10"><path d="M0.8 0.8L9 9M9 0.8L0.8 9" stroke="#666a6c" stroke-width="1.2"/></svg>
<div style="left:569px;top:231.2px;width:1313px;height:21.7px;background:#323232;"></div>
<div style="left:1656px;top:83px;width:1px;height:822px;background:#525252;"></div>
<div style="left:639.0px;top:125.25px;width:27.0px;height:21.25px;background:#3a3a3a;"></div>
<div style="left:801.0px;top:359.0px;width:27.0px;height:21.25px;background:#3a3a3a;"></div>
<div style="left:963.0px;top:359.0px;width:18.0px;height:21.25px;background:#3a3a3a;"></div>
<span class="t" style="left:576.00px;top:87.95px;font-size:15px;color:#cc7832;font-family:'Liberation Mono',monospace;transform:scaleY(0.83);transform-origin:0 76.67%;">package</span>
<span class="t" style="left:648.00px;top:87.95px;font-size:15px;color:#a9b7c6;font-family:'Liberation Mono',monospace;transform:scaleY(0.83);transform-origin:0 76.67%;">org.acme</span>
<span class="t" style="left:720.00px;top:87.95px;font-size:15px;color:#cc7832;font-family:'Liberation Mono',monospace;transform:scaleY(0.83);transform-origin:0 76.67%;">;</span>
<span class="t" style="left:514.90px;top:90.74px;font-size:11px;color:#606366;letter-spacing:1.275px;">1</span>
<span class="t" style="left:514.90px;top:111.99px;font-size:11px;color:#606366;letter-spacing:1.275px;">2</span>
<span class="t" style="left:576.00px;top:130.45px;font-size:15px;color:#cc7832;font-family:'Liberation Mono',monospace;transform:scaleY(0.83);transform-origin:0 76.67%;">import</span>
<span class="t" style="left:639.00px;top:130.45px;font-size:15px;color:#8c9aa6;font-family:'Liberation Mono',monospace;transform:scaleY(0.83);transform-origin:0 76.67%;">...</span>
<span class="t" style="left:514.90px;top:133.24px;font-size:11px;color:#606366;letter-spacing:1.275px;">3</span>
<span class="t" style="left:507.50px;top:154.49px;font-size:11px;color:#606366;letter-spacing:1.275px;">10</span>
<span class="t" style="left:576.00px;top:172.95px;font-size:15px;color:#bbb529;font-family:'Liberation Mono',monospace;transform:scaleY(0.83);transform-origin:0 76.67%;">@Path</span>
<span class="t" style="left:621.00px;top:172.95px;font-size:15px;color:#a9b7c6;font-family:'Liberation Mono',monospace;transform:scaleY(0.83);transform-origin:0 76.67%;">(</span>
<span class="t" style="left:630.00px;top:172.95px;font-size:15px;color:#6a8759;font-family:'Liberation Mono',monospace;transform:scaleY(0.83);transform-origin:0 76.67%;">"/hello"</span>
<span class="t" style="left:702.00px;top:172.95px;font-size:15px;color:#a9b7c6;font-family:'Liberation Mono',monospace;transform:scaleY(0.83);transform-origin:0 76.67%;">)</span>
<span class="t" style="left:507.50px;top:175.74px;font-size:11px;color:#606366;letter-spacing:1.689px;">11</span>
<span class="t" style="left:576.00px;top:194.20px;font-size:15px;color:#cc7832;font-family:'Liberation Mono',monospace;transform:scaleY(0.83);transform-origin:0 76.67%;">public class</span>
<span class="t" style="left:693.00px;top:194.20px;font-size:15px;color:#a9b7c6;font-family:'Liberation Mono',monospace;transform:scaleY(0.83);transform-origin:0 76.67%;">ExampleResource {</span>
<span class="t" style="left:507.50px;top:196.99px;font-size:11px;color:#606366;letter-spacing:1.275px;">12</span>
<span class="t" style="left:507.50px;top:218.24px;font-size:11px;color:#606366;letter-spacing:1.275px;">13</span>
<span class="t" style="left:612.00px;top:236.70px;font-size:15px;color:#bbb529;font-family:'Liberation Mono',monospace;transform:scaleY(0.83);transform-origin:0 76.67%;">@ConfigProperty</span>
<span class="t" style="left:747.00px;top:236.70px;font-size:15px;color:#a9b7c6;font-family:'Liberation Mono',monospace;transform:scaleY(0.83);transform-origin:0 76.67%;">(</span>
<span class="t" style="left:756.00px;top:236.70px;font-size:15px;color:#d0d0ff;font-family:'Liberation Mono',monospace;transform:scaleY(0.83);transform-origin:0 76.67%;">name</span>
<span class="t" style="left:792.00px;top:236.70px;font-size:15px;color:#a9b7c6;font-family:'Liberation Mono',monospace;transform:scaleY(0.83);transform-origin:0 76.67%;">=</span>
<span class="t" style="left:801.00px;top:236.70px;font-size:15px;color:#6a8759;font-family:'Liberation Mono',monospace;transform:scaleY(0.83);transform-origin:0 76.67%;">"my.property"</span>
<span class="t" style="left:918.00px;top:236.70px;font-size:15px;color:#a9b7c6;font-family:'Liberation Mono',monospace;transform:scaleY(0.83);transform-origin:0 76.67%;">)</span>
<span class="t" style="left:507.50px;top:239.49px;font-size:11px;color:#a4a3a3;letter-spacing:1.275px;">14</span>
<span class="t" style="left:612.00px;top:257.95px;font-size:15px;color:#cc7832;font-family:'Liberation Mono',monospace;transform:scaleY(0.83);transform-origin:0 76.67%;">public</span>
<span class="t" style="left:675.00px;top:257.95px;font-size:15px;color:#a9b7c6;font-family:'Liberation Mono',monospace;transform:scaleY(0.83);transform-origin:0 76.67%;">String</span>
<span class="t" style="left:738.00px;top:257.95px;font-size:15px;color:#9876aa;font-family:'Liberation Mono',monospace;transform:scaleY(0.83);transform-origin:0 76.67%;">myProperty</span>
<span class="t" style="left:828.00px;top:257.95px;font-size:15px;color:#cc7832;font-family:'Liberation Mono',monospace;transform:scaleY(0.83);transform-origin:0 76.67%;">;</span>
<span class="t" style="left:507.50px;top:260.74px;font-size:11px;color:#606366;letter-spacing:1.275px;">15</span>
<span class="t" style="left:507.50px;top:281.99px;font-size:11px;color:#606366;letter-spacing:1.275px;">16</span>
<span class="t" style="left:612.00px;top:300.45px;font-size:15px;color:#bbb529;font-family:'Liberation Mono',monospace;transform:scaleY(0.83);transform-origin:0 76.67%;">@Retry</span>
<span class="t" style="left:507.50px;top:303.24px;font-size:11px;color:#606366;letter-spacing:1.275px;">17</span>
<span class="t" style="left:612.00px;top:321.70px;font-size:15px;color:#bbb529;font-family:'Liberation Mono',monospace;transform:scaleY(0.83);transform-origin:0 76.67%;">@GET</span>
<span class="t" style="left:507.50px;top:324.49px;font-size:11px;color:#606366;letter-spacing:1.275px;">18</span>
<span class="t" style="left:612.00px;top:342.95px;font-size:15px;color:#bbb529;font-family:'Liberation Mono',monospace;transform:scaleY(0.83);transform-origin:0 76.67%;">@Produces</span>
<span class="t" style="left:693.00px;top:342.95px;font-size:15px;color:#a9b7c6;font-family:'Liberation Mono',monospace;transform:scaleY(0.83);transform-origin:0 76.67%;">(MediaType.</span>
<span class="t" style="left:792.00px;top:342.95px;font-size:15px;color:#9876aa;font-family:'Liberation Mono',monospace;transform:scaleY(0.83);transform-origin:0 76.67%;font-style:italic;">TEXT_PLAIN</span>
<span class="t" style="left:882.00px;top:342.95px;font-size:15px;color:#a9b7c6;font-family:'Liberation Mono',monospace;transform:scaleY(0.83);transform-origin:0 76.67%;">)</span>
<span class="t" style="left:507.50px;top:345.74px;font-size:11px;color:#606366;letter-spacing:1.275px;">19</span>
<span class="t" style="left:612.00px;top:364.20px;font-size:15px;color:#cc7832;font-family:'Liberation Mono',monospace;transform:scaleY(0.83);transform-origin:0 76.67%;">public</span>
<span class="t" style="left:675.00px;top:364.20px;font-size:15px;color:#a9b7c6;font-family:'Liberation Mono',monospace;transform:scaleY(0.83);transform-origin:0 76.67%;">String</span>
<span class="t" style="left:738.00px;top:364.20px;font-size:15px;color:#ffc66d;font-family:'Liberation Mono',monospace;transform:scaleY(0.83);transform-origin:0 76.67%;">hello</span>
<span class="t" style="left:783.00px;top:364.20px;font-size:15px;color:#a9b7c6;font-family:'Liberation Mono',monospace;transform:scaleY(0.83);transform-origin:0 76.67%;">()</span>
<span class="t" style="left:810.00px;top:364.20px;font-size:15px;color:#8c9aa6;font-family:'Liberation Mono',monospace;transform:scaleY(0.83);transform-origin:0 76.67%;">{</span>
<span class="t" style="left:828.00px;top:364.20px;font-size:15px;color:#cc7832;font-family:'Liberation Mono',monospace;transform:scaleY(0.83);transform-origin:0 76.67%;">return</span>
<span class="t" style="left:891.00px;top:364.20px;font-size:15px;color:#6a8759;font-family:'Liberation Mono',monospace;transform:scaleY(0.83);transform-origin:0 76.67%;">"hello"</span>
<span class="t" style="left:954.00px;top:364.20px;font-size:15px;color:#cc7832;font-family:'Liberation Mono',monospace;transform:scaleY(0.83);transform-origin:0 76.67%;">;</span>
<span class="t" style="left:972.00px;top:364.20px;font-size:15px;color:#8c9aa6;font-family:'Liberation Mono',monospace;transform:scaleY(0.83);transform-origin:0 76.67%;">}</span>
<span class="t" style="left:507.50px;top:366.99px;font-size:11px;color:#606366;letter-spacing:1.275px;">20</span>
<span class="t" style="left:576.00px;top:385.45px;font-size:15px;color:#a9b7c6;font-family:'Liberation Mono',monospace;transform:scaleY(0.83);transform-origin:0 76.67%;">}</span>
<span class="t" style="left:507.50px;top:388.24px;font-size:11px;color:#606366;letter-spacing:1.275px;">23</span>
<svg style="left:563px;top:131px;" width="11" height="11" viewBox="0 0 11 11"><rect x="0.5" y="0.5" width="10" height="10" fill="#2b2b2b" stroke="#6a6d6f" stroke-width="1"/><path d="M3 5.5h5M5.5 3v5" stroke="#6a6d6f" stroke-width="1"/></svg>
<svg style="left:563px;top:365px;" width="11" height="11" viewBox="0 0 11 11"><rect x="0.5" y="0.5" width="10" height="10" fill="#2b2b2b" stroke="#6a6d6f" stroke-width="1"/><path d="M3 5.5h5M5.5 3v5" stroke="#6a6d6f" stroke-width="1"/></svg>
<svg style="left:563px;top:300.6px;" width="11" height="15" viewBox="0 0 11 15"><path d="M0.5 0.5h10v7.5L5.5 14L0.5 8z" fill="#2b2b2b" stroke="#6a6d6f" stroke-width="1"/><path d="M3 5.5h5" stroke="#6a6d6f" stroke-width="1"/></svg>
<svg style="left:563px;top:340px;" width="11" height="15" viewBox="0 0 11 15"><path d="M0.5 14.5h10V7L5.5 1L0.5 7z" fill="#2b2b2b" stroke="#6a6d6f" stroke-width="1"/><path d="M3 9.5h5" stroke="#6a6d6f" stroke-width="1"/></svg>
<svg style="left:586px;top:211.5px;" width="16" height="21" viewBox="0 0 16 21"><path d="M8 1.2a6.6 6.6 0 0 1 3.4 12.2V15H4.6v-1.6A6.6 6.6 0 0 1 8 1.2z" fill="#c9a62c"/><path d="M4.8 16.2h6.4M5 18.2h6" stroke="#c4c4c4" stroke-width="1.3"/><path d="M6 19.6h4" stroke="#9a9a9a" stroke-width="1"/></svg>
<svg style="left:1865px;top:84px;" width="17" height="14" viewBox="0 0 17 14"><path d="M2.6 6.8L6.6 10.8L14.4 2.8" fill="none" stroke="#62b543" stroke-width="2.6"/></svg>
<span class="t" style="left:580.60px;top:914.30px;font-size:15px;color:#bbbbbb;letter-spacing:-0.411px;">ExampleResource</span>
<svg style="left:710.5px;top:916.5px;" width="6" height="9" viewBox="0 0 6 9"><path d="M1 0.8L4.3 4.4L1 8" fill="none" stroke="#6b6e70" stroke-width="1.1"/></svg>
<span class="t" style="left:727.50px;top:914.30px;font-size:15px;color:#bbbbbb;letter-spacing:-0.119px;">myProperty</span>
<span class="t" style="left:0.30px;top:122.00px;font-size:13px;color:#bbbbbb;letter-spacing:-0.092px;transform:rotate(-90deg);transform-origin:0 0;">1: Project</span>
<div style="left:12.7px;top:114.6px;width:1px;height:6.6px;background:#bbbbbb;"></div>
<svg style="left:-6px;top:128px;" width="19" height="13" viewBox="0 0 19 13"><path d="M0 1h6.5l2 2.4H18.5V12.5H0z" fill="#afb1b3"/></svg>
<span class="t" style="left:0.30px;top:780.00px;font-size:13px;color:#bbbbbb;letter-spacing:-0.210px;transform:rotate(-90deg);transform-origin:0 0;">Z: Structure</span>
<div style="left:12.7px;top:772.6px;width:1px;height:7px;background:#bbbbbb;"></div>
<svg style="left:-1px;top:786px;" width="13" height="14" viewBox="0 0 13 14"><rect x="0" y="7" width="5.4" height="5.6" fill="#afb1b3"/><rect x="6.6" y="7" width="5.4" height="5.6" fill="#afb1b3"/><rect x="6.6" y="0.6" width="5.4" height="5.6" fill="#afb1b3"/></svg>
<span class="t" style="left:0.30px;top:897.60px;font-size:13px;color:#bbbbbb;letter-spacing:-0.160px;transform:rotate(-90deg);transform-origin:0 0;">2: Favorites</span>
<div style="left:12.7px;top:890.6px;width:1px;height:7px;background:#bbbbbb;"></div>
<svg style="left:-3px;top:902px;" width="16" height="17" viewBox="0 0 16 17"><path d="M7.5 0.8l2.2 5.2l5.6 0.5l-4.2 3.7l1.3 5.5L7.5 12.8L2.6 15.7l1.3-5.5L-0.3 6.5l5.6-0.5z" fill="#afb1b3"/></svg>
<svg style="left:1888px;top:64px;" width="17" height="17" viewBox="0 0 17 17"><circle cx="8.5" cy="4" r="2.4" fill="#afb1b3"/><circle cx="8.5" cy="7.8" r="2" fill="#afb1b3"/><ellipse cx="8.5" cy="13.3" rx="3.1" ry="2.9" fill="#afb1b3"/><path d="M7.5 7.2L2.4 3.2M9.5 7.2L14.6 3.2M2 8.5H15M7 9C4 9.4 2.8 11 2.8 16.2M10 9C13 9.4 14.2 11 14.2 16.2" stroke="#afb1b3" stroke-width="1.5" fill="none"/></svg>
<span class="t" style="left:1901.60px;top:86.80px;font-size:13px;color:#bbbbbb;letter-spacing:-0.005px;transform:rotate(90deg);transform-origin:0 0;">Ant Build</span>
<span class="t" style="left:1886.50px;top:165.92px;font-size:19px;color:#afb1b3;font-weight:700;font-style:italic;letter-spacing:2.094px;">m</span>
<span class="t" style="left:1901.60px;top:188.50px;font-size:13px;color:#bbbbbb;letter-spacing:0.194px;transform:rotate(90deg);transform-origin:0 0;">Maven</span>
<svg style="left:1888px;top:256px;" width="17" height="17" viewBox="0 0 17 17"><g transform="rotate(45 8.6 8.6)"><ellipse cx="8.6" cy="8.6" rx="8" ry="6.3" fill="#afb1b3"/><rect x="-1" y="7.95" width="19" height="1.3" fill="#3c3f41"/></g></svg>
<span class="t" style="left:1901.60px;top:279.30px;font-size:13px;color:#bbbbbb;letter-spacing:-1.297px;transform:rotate(90deg);transform-origin:0 0;">CDI</span>
<svg style="left:1888.5px;top:323.5px;" width="16" height="17" viewBox="0 0 16 17"><ellipse cx="8" cy="2.7" rx="7.4" ry="2.1" fill="#afb1b3"/><path d="M0.6 3.4A7.4 2.1 0 0 0 15.4 3.4V6.1A7.4 2.1 0 0 1 0.6 6.1z" fill="#afb1b3"/><path d="M0.6 7.2A7.4 2.1 0 0 0 15.4 7.2V9.9A7.4 2.1 0 0 1 0.6 9.9z" fill="#afb1b3"/><path d="M0.6 11.1A7.4 2.1 0 0 0 15.4 11.1V13.8A7.4 2.1 0 0 1 0.6 13.8z" fill="#afb1b3"/></svg>
<span class="t" style="left:1901.60px;top:345.00px;font-size:13px;color:#bbbbbb;letter-spacing:-0.145px;transform:rotate(90deg);transform-origin:0 0;">Database</span>
<svg style="left:1888px;top:431px;" width="17" height="17" viewBox="0 0 17 17"><g transform="rotate(45 8.6 8.6)"><ellipse cx="8.6" cy="8.6" rx="8" ry="6.3" fill="#afb1b3"/><rect x="-1" y="7.95" width="19" height="1.3" fill="#3c3f41"/></g><path d="M9.9 9.7L15.1 6.8L18 6V18H5L6.1 14.8L7.4 10.3z" fill="#3c3f41"/><path d="M8 12.5L10.9 15.1L15.7 9.7" stroke="#afb1b3" stroke-width="1.8" fill="none"/></svg>
<span class="t" style="left:1901.60px;top:453.00px;font-size:13px;color:#bbbbbb;letter-spacing:-0.041px;transform:rotate(90deg);transform-origin:0 0;">Bean Validation</span>
<svg style="left:34px;top:943px;" width="14" height="13" viewBox="0 0 14 13"><path d="M0.4 1.5h2.6M0.4 6.2h2.6M0.4 10.9h2.6" stroke="#afb1b3" stroke-width="2.4"/><path d="M4.8 1.5h8.4M4.8 6.2h8.4M4.8 10.9h8.4" stroke="#afb1b3" stroke-width="2.4"/></svg>
<span class="t" style="left:54.00px;top:943.80px;font-size:13px;color:#bbbbbb;letter-spacing:0.208px;">6: TODO</span>
<div style="left:54px;top:957px;width:7px;height:1px;background:#bbbbbb;"></div>
<svg style="left:134px;top:942px;" width="16" height="14" viewBox="0 0 16 14"><rect x="0" y="0" width="15" height="13.4" rx="1" fill="#afb1b3"/><path d="M3 3.2l3.6 3.2L3 9.6M7.8 10.2h4.4" stroke="#3c3f41" stroke-width="1.4" fill="none"/></svg>
<span class="t" style="left:155.30px;top:943.80px;font-size:13px;color:#bbbbbb;letter-spacing:0.359px;">Terminal</span>
<svg style="left:234px;top:942px;" width="16" height="16" viewBox="0 0 16 16"><path d="M0.5 0.5h11v2.6H0.5z" fill="#afb1b3"/><path d="M0.5 0.5h11v11.3H0.5z" fill="#afb1b3" opacity="0.9"/><rect x="4.6" y="5.6" width="11" height="10" fill="#3c3f41"/><rect x="5.8" y="6.8" width="9.2" height="8" fill="#afb1b3"/><path d="M9.6 8.4H7.6v4.8h2M7.6 10.8h1.6M13.6 8.4h-2v4.8h2M11.6 10.8h1.6" stroke="#3c3f41" stroke-width="0.9" fill="none"/></svg>
<span class="t" style="left:255.50px;top:943.80px;font-size:13px;color:#bbbbbb;letter-spacing:0.011px;">Java Enterprise</span>
<svg style="left:1786px;top:940px;" width="19" height="18" viewBox="0 0 19 18"><path d="M9 1.2a7.6 7.6 0 1 0 0 15.2h7.6V8.8A7.6 7.6 0 0 0 9 1.2z" fill="none" stroke="#afb1b3" stroke-width="1.7"/></svg>
<span class="t" style="left:1809.50px;top:943.80px;font-size:13px;color:#bbbbbb;letter-spacing:0.217px;">Event Log</span>
<svg style="left:3px;top:970px;" width="17" height="17" viewBox="0 0 17 17"><rect x="4.2" y="0.9" width="11.4" height="11.4" fill="none" stroke="#afb1b3" stroke-width="1.5"/><path d="M1 4.4v11h11" fill="none" stroke="#afb1b3" stroke-width="1.5"/></svg>
<span class="t" style="left:1588.00px;top:969.80px;font-size:15px;color:#bbbbbb;letter-spacing:-0.809px;">14:35</span>
<span class="t" style="left:1636.50px;top:969.80px;font-size:15px;color:#bbbbbb;letter-spacing:-2.008px;">LF</span>
<span class="t" style="left:1677.00px;top:969.80px;font-size:15px;color:#bbbbbb;letter-spacing:-0.600px;">UTF-8</span>
<span class="t" style="left:1742.00px;top:969.80px;font-size:15px;color:#bbbbbb;letter-spacing:-0.443px;">4 spaces</span>
<svg style="left:1656.5px;top:973px;" width="8" height="11" viewBox="0 0 8 11"><path d="M0.6 4.2h6L3.6 0.6z" fill="#afb1b3"/><path d="M0.6 6.6h6L3.6 10.2z" fill="#afb1b3"/></svg>
<svg style="left:1721.8px;top:973px;" width="8" height="11" viewBox="0 0 8 11"><path d="M0.6 4.2h6L3.6 0.6z" fill="#afb1b3"/><path d="M0.6 6.6h6L3.6 10.2z" fill="#afb1b3"/></svg>
<svg style="left:1803px;top:973px;" width="8" height="11" viewBox="0 0 8 11"><path d="M0.6 4.2h6L3.6 0.6z" fill="#afb1b3"/><path d="M0.6 6.6h6L3.6 10.2z" fill="#afb1b3"/></svg>
<svg style="left:1824px;top:970px;" width="16" height="15" viewBox="0 0 16 15"><rect x="5" y="7" width="10" height="7.6" fill="#afb1b3"/><path d="M2 8V4.4a2.8 2.8 0 0 1 5.6 0V7" fill="none" stroke="#afb1b3" stroke-width="1.6"/></svg>
<svg style="left:1856px;top:969px;" width="17" height="20" viewBox="0 0 17 20"><g transform="translate(6 6.3)" fill="#afb1b3"><rect x="-1.3" y="-5.6" width="2.6" height="3" transform="rotate(0)" /><rect x="-1.3" y="-5.6" width="2.6" height="3" transform="rotate(60)" /><rect x="-1.3" y="-5.6" width="2.6" height="3" transform="rotate(120)" /><rect x="-1.3" y="-5.6" width="2.6" height="3" transform="rotate(180)" /><rect x="-1.3" y="-5.6" width="2.6" height="3" transform="rotate(240)" /><rect x="-1.3" y="-5.6" width="2.6" height="3" transform="rotate(300)" /><circle r="4"/><circle r="1.6" fill="#3c3f41"/></g><rect x="7" y="7.5" width="10" height="12.5" fill="#3c3f41"/><path d="M9.2 10.6a2.6 2.6 0 1 1 4 2.4c-0.9 0.6-1.2 1-1.2 2.2" fill="none" stroke="#afb1b3" stroke-width="1.5"/><rect x="11.2" y="16.6" width="1.7" height="1.8" fill="#afb1b3"/></svg>
<svg style="left:1886px;top:969px;" width="17" height="18" viewBox="0 0 17 18"><path d="M4.6 1h7.8v3.4H4.6z" fill="#afb1b3"/><rect x="1.5" y="4.2" width="14" height="1.6" fill="#afb1b3"/><path d="M4.2 6.4h8.6v2.6a4.3 4.3 0 0 1-8.6 0z" fill="#afb1b3"/><path d="M1.5 17c0.4-3.2 2.6-4.6 7-4.6s6.6 1.4 7 4.6z" fill="#afb1b3"/><circle cx="6.7" cy="8.4" r="0.9" fill="#3c3f41"/><circle cx="10.3" cy="8.4" r="0.9" fill="#3c3f41"/><path d="M6.6 10.6c1 1 2.8 1 3.8 0" stroke="#3c3f41" stroke-width="0.8" fill="none"/></svg>
</div></body></html>
